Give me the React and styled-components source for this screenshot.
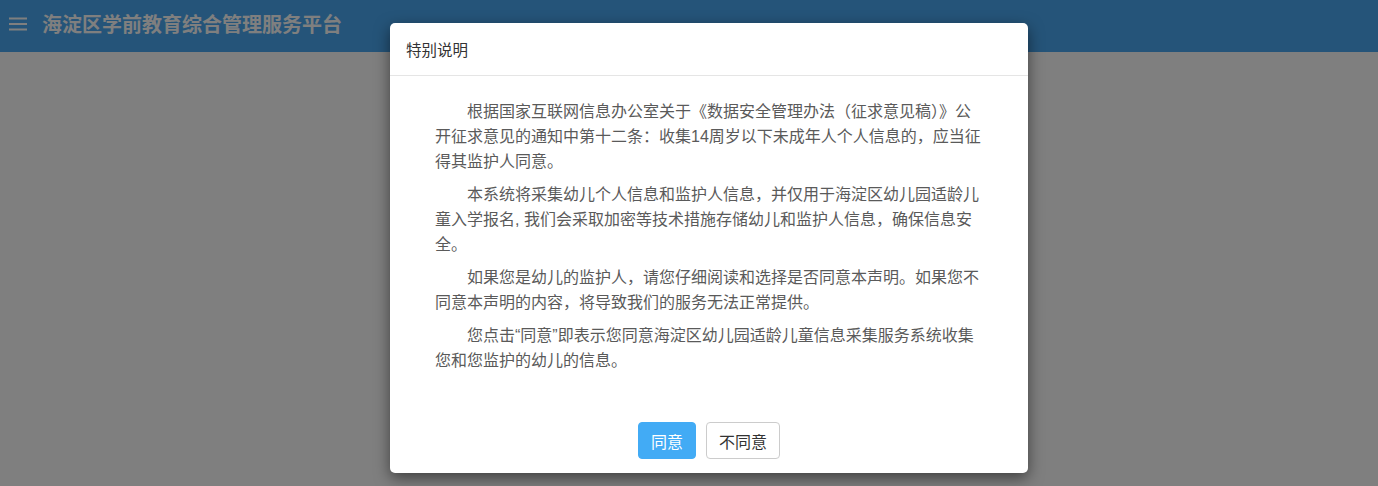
import React from "react";
import styled, { createGlobalStyle } from "styled-components";

const GlobalStyle = createGlobalStyle`
  html, body { margin: 0; padding: 0; }
  body {
    width: 1378px;
    height: 486px;
    overflow: hidden;
    background: #ffffff;
    font-family: "Noto Sans CJK SC", "Liberation Sans", sans-serif;
  }
`;

const Page = styled.div`
  position: relative;
  width: 1378px;
  height: 486px;
  background: #ffffff;
`;

const TopBar = styled.header`
  height: 52px;
  background: #4aa9f3;
  display: flex;
  align-items: center;
  padding-left: 6px;
  gap: 12px;
  box-sizing: border-box;
`;

const MenuIcon = styled.svg`
  width: 24px;
  height: 24px;
  flex: none;
  margin-top: -4px;
`;

const AppTitle = styled.h1`
  margin: 0 0 6px 0;
  font-size: 20px;
  font-weight: 700;
  color: #ffffff;
`;

const Overlay = styled.div`
  position: absolute;
  inset: 0;
  background: rgba(0, 0, 0, 0.5);
  display: flex;
  justify-content: center;
  align-items: flex-start;
  padding-top: 23px;
  padding-left: 40px;
  box-sizing: border-box;
`;

const Dialog = styled.div`
  width: 638px;
  height: 450px;
  background: #ffffff;
  border-radius: 5px;
  box-shadow: 0 5px 15px rgba(0, 0, 0, 0.5);
  display: flex;
  flex-direction: column;
  box-sizing: border-box;
`;

const DialogHeader = styled.div`
  height: 53px;
  border-bottom: 1px solid #e5e5e5;
  display: flex;
  align-items: center;
  padding: 0 16px;
  box-sizing: border-box;
`;

const DialogTitle = styled.h4`
  margin: 0 0 1px 0;
  font-size: 15.5px;
  font-weight: 400;
  color: #333333;
`;

const DialogBody = styled.div`
  padding: 23px 45px 0 45px;
  flex: 1;
`;

const Paragraph = styled.p`
  margin: 0 0 8px 0;
  font-family: "Liberation Sans", "Noto Sans CJK SC", sans-serif;
  font-size: 16px;
  line-height: 25px;
  color: #5a5a5a;
  text-indent: 2em;
`;

const DialogFooter = styled.div`
  display: flex;
  justify-content: center;
  gap: 10px;
  padding: 0 0 14px 0;
`;

const Button = styled.button`
  height: 37px;
  padding: 0 12px;
  font-family: "Noto Sans CJK SC", "Liberation Sans", sans-serif;
  font-size: 16px;
  border-radius: 4px;
  cursor: pointer;
  border: 1px solid ${(p) => (p.$primary ? "#42abf5" : "#cccccc")};
  background: ${(p) => (p.$primary ? "#42abf5" : "#ffffff")};
  color: ${(p) => (p.$primary ? "#ffffff" : "#333333")};
`;

export default function App() {
  return (
    <>
      <GlobalStyle />
      <Page>
        <TopBar>
          <MenuIcon viewBox="0 0 24 24">
            <path d="M3 6.5h18M3 12h18M3 17.5h18" stroke="#ffffff" strokeWidth="1.8" fill="none" />
          </MenuIcon>
          <AppTitle>海淀区学前教育综合管理服务平台</AppTitle>
        </TopBar>
        <Overlay>
          <Dialog>
            <DialogHeader>
              <DialogTitle>特别说明</DialogTitle>
            </DialogHeader>
            <DialogBody>
              <Paragraph>
                根据国家互联网信息办公室关于《数据安全管理办法（征求意见稿）》公开征求意见的通知中第十二条：收集14周岁以下未成年人个人信息的，应当征得其监护人同意。
              </Paragraph>
              <Paragraph>
                本系统将采集幼儿个人信息和监护人信息，并仅用于海淀区幼儿园适龄儿童入学报名, 我们会采取加密等技术措施存储幼儿和监护人信息，确保信息安全。
              </Paragraph>
              <Paragraph>
                如果您是幼儿的监护人，请您仔细阅读和选择是否同意本声明。如果您不同意本声明的内容，将导致我们的服务无法正常提供。
              </Paragraph>
              <Paragraph>
                您点击“同意”即表示您同意海淀区幼儿园适龄儿童信息采集服务系统收集您和您监护的幼儿的信息。
              </Paragraph>
            </DialogBody>
            <DialogFooter>
              <Button $primary>同意</Button>
              <Button>不同意</Button>
            </DialogFooter>
          </Dialog>
        </Overlay>
      </Page>
    </>
  );
}
